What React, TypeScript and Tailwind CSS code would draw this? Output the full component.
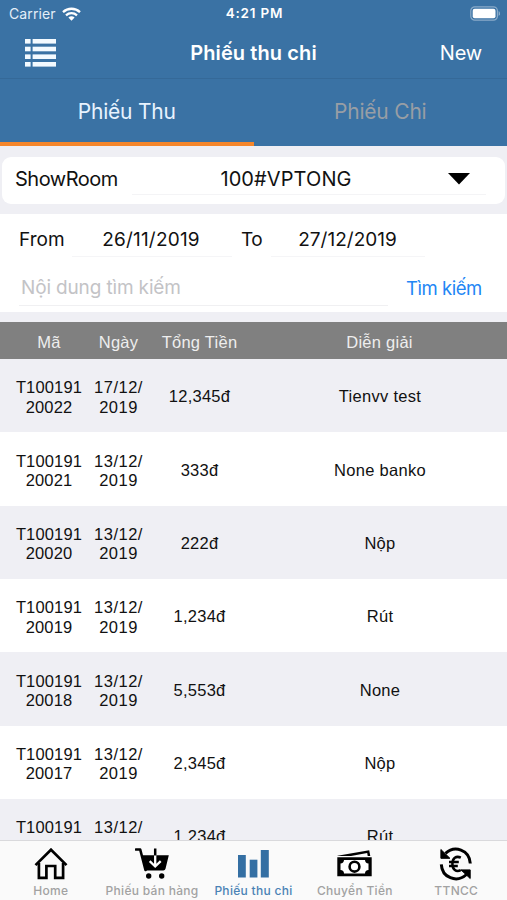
import type { ReactNode } from "react";

const ROWS = [
  ["T100191", "20022", "17/12/", "2019", "12,345đ", "Tienvv test"],
  ["T100191", "20021", "13/12/", "2019", "333đ", "None banko"],
  ["T100191", "20020", "13/12/", "2019", "222đ", "Nộp"],
  ["T100191", "20019", "13/12/", "2019", "1,234đ", "Rút"],
  ["T100191", "20018", "13/12/", "2019", "5,553đ", "None"],
  ["T100191", "20017", "13/12/", "2019", "2,345đ", "Nộp"],
  ["T100191", "", "13/12/", "", "1,234đ", "Rút"],
];

function StatusBar() {
  return (
    <div className="grid h-[27px] grid-cols-3 items-center pr-[7px] pl-[9px] text-white">
      <div className="flex items-center gap-[6px]">
        <span className="text-[14px] tracking-[0.1px] text-[#e4eef8]">Carrier</span>
        <svg width="19" height="14" viewBox="0 0 19 14" fill="none" stroke="white" strokeWidth="2.3">
          <path d="M1 5.1C5.8.6 13.2.6 18 5.1" />
          <path d="M4 8.3c3.2-2.9 7.8-2.900 11 0" />
          <path d="M6.400 10.400 9.500 13.700l3.100-3.300c-1.800-1.600-4.400-1.600-6.200 0Z" fill="white" stroke="none" />
        </svg>
      </div>
      <span className="text-center text-[13.5px] font-semibold tracking-[0.8px] whitespace-nowrap">4:21 PM</span>
      <svg className="justify-self-end" width="30" height="15" viewBox="0 0 30 15">
        <rect x=".8" y=".8" width="26.600" height="13.400" rx="4" fill="none" stroke="#8aabc9" strokeWidth="1.200" />
        <rect x="2.700" y="2.700" width="22.800" height="9.600" rx="2" fill="white" />
        <path d="M28.600 5c2 1 2 4 0 5Z" fill="#8aabc9" />
      </svg>
    </div>
  );
}

function MenuIcon() {
  return (
    <svg width="31" height="28" viewBox="0 0 31 28" fill="#f3faff">
      {[0, 7.7, 15.4, 23].map((y) => (
        <g key={y}>
          <rect x="0" y={y} width="5.600" height="4.600" />
          <rect x="7.600" y={y} width="23.400" height="4.600" />
        </g>
      ))}
    </svg>
  );
}

function HomeIcon() {
  return (
    <svg width="34" height="33" viewBox="0 0 34 33" fill="none" stroke="black" strokeWidth="2.700">
      <path d="M1.500 17.100 17 1.700l15.500 15.400" />
      <path d="M4.900 15V29.800h7.500V18h8.800V29.800h7.900V15" />
    </svg>
  );
}

function CartIcon() {
  return (
    <svg width="34" height="33" viewBox="0 0 34 33">
      <path d="M1 1.500h4.200L10.500 22" fill="none" stroke="black" strokeWidth="2.600" strokeLinejoin="round" strokeLinecap="round" />
      <path d="M6.600 7.300h27.200L30.500 20.800q-.4 1.700-2.200 1.700H10.800Z" />
      <path d="M20.200 5v13M14.700 13.200l5.500 5.300 5.500-5.300" fill="none" stroke="white" strokeWidth="2.300" />
      <path d="M20.200.5v7" stroke="black" strokeWidth="2.500" />
      <circle cx="13.700" cy="28" r="2.700" />
      <circle cx="26.700" cy="28" r="2.700" />
    </svg>
  );
}

function BarsIcon() {
  return (
    <svg width="31" height="28" viewBox="0 0 31 28" fill="#346fa3">
      <rect x="0" y="5" width="7.800" height="22.500" />
      <rect x="11.700" y="9.700" width="7.700" height="17.800" />
      <rect x="22.800" y="0" width="8" height="27.500" />
    </svg>
  );
}

function MoneyIcon() {
  return (
    <svg className="mb-[2px]" width="35" height="27" viewBox="0 0 35 27">
      <path d="M.5 5.700 32.200.2l1.100 5.700H30.700l-.5-2.900L14 5.900H.5Z" />
      <path d="M.3 7.300h34.400v19H.3Z" />
      <path d="M7 10h21c0 2 1.300 3.400 3.500 3.400v6.600c-2.200 0-3.500 1.300-3.500 3.400H7c0-2.100-1.300-3.400-3.500-3.400v-6.600C5.700 13.400 7 12 7 10Z" fill="white" />
      <circle cx="17.500" cy="16.700" r="4.900" fill="none" stroke="black" strokeWidth="2.600" />
    </svg>
  );
}

function EuroCycleIcon() {
  return (
    <svg width="34" height="34" viewBox="0 0 34 34" fill="none" stroke="black" strokeWidth="3">
      <path d="M6.500 6.300C15.500-2 30.500 2.500 31.300 16.500" />
      <path d="M2.300 17.300C3 30.500 17.500 36.500 27.500 27.500" />
      <path d="M1.900 2.500v8.800h9Z" fill="black" stroke="black" strokeWidth="1" strokeLinejoin="round" />
      <path d="M22 22.900h9.200v8.600Z" fill="black" stroke="black" strokeWidth="1" strokeLinejoin="round" />
      <path d="M21.800 10.700c-4.700-2.300-8.400.6-8.400 6.200s3.700 8.500 8.400 6.200M10 14.900h9.800M10 19h8.800" strokeWidth="2.500" />
    </svg>
  );
}

function TabItem({ icon, label, active = false }: { icon: ReactNode; label: string; active?: boolean }) {
  return (
    <div className="flex flex-col items-center pt-[5px]">
      <div className="flex h-[36px] items-center justify-center">{icon}</div>
      <span
        className={`mt-[1px] text-[12px] leading-[16px] font-medium tracking-[0.3px] whitespace-nowrap ${active ? "text-[#4a82b5]" : "text-[#a2a2a2]"}`}
      >
        {label}
      </span>
    </div>
  );
}

const COLUMNS = "grid grid-cols-[70px_69px_93px_267px] pl-[14px]";

export default function App() {
  return (
    <div className="flex h-[900px] w-[507px] flex-col overflow-hidden bg-[#efeff4] font-['Inter','Liberation_Sans',sans-serif] text-[#111]">
      <header className="h-[146px] shrink-0 bg-[#3a72a4]">
        <StatusBar />
        <div className="grid h-[52px] grid-cols-3 items-center border-b border-[#356998] px-[25px] text-white">
          <MenuIcon />
          <h1 className="text-center text-[20px] font-semibold tracking-[0.1px] whitespace-nowrap">Phiếu thu chi</h1>
          <span className="text-right text-[20px] tracking-[-0.2px]">New</span>
        </div>
        <nav className="grid h-[67px] grid-cols-2 text-center text-[21px] leading-[65px] tracking-[-0.2px]">
          <span className="h-[67px] border-b-4 border-[#f5862b] text-[#e8f3fe]">Phiếu Thu</span>
          <span className="h-[67px] text-[#989ea5]">Phiếu Chi</span>
        </nav>
      </header>

      <section className="mx-[2px] mt-[11px] flex h-[47px] shrink-0 rounded-[9px] bg-white pl-[13px] text-[20px]">
        <span className="w-[117px] leading-[44px] tracking-[-0.5px]">ShowRoom</span>
        <div className="flex h-[38px] w-[354px] items-center border-b border-[#f4f4f6]">
          <span className="w-[308px] pt-[6px] text-center tracking-[0.1px]">100#VPTONG</span>
          <svg className="mt-[6px] ml-[8px]" width="22" height="12" viewBox="0 0 22 12">
            <path d="M0 0h22L11 11.500Z" />
          </svg>
        </div>
      </section>

      <section className="mt-[10px] h-[98px] shrink-0 bg-white pl-[19px]">
        <div className="flex h-[43px] text-[19px] leading-[51px]">
          <span className="w-[53px]">From</span>
          <span className="w-[160px] border-b border-[#f5f5f7] pr-[2px] text-center tracking-[0.2px]">26/11/2019</span>
          <span className="w-[39px] pl-[9px] tracking-[-0.5px]">To</span>
          <span className="w-[154px] border-b border-[#f5f5f7] pr-px text-center">27/12/2019</span>
        </div>
        <div className="flex h-[49px] text-[19px] leading-[62px]">
          <span className="w-[369px] border-b border-[#f0f0f2] pl-[2px] tracking-[-0.15px] text-[#c3c3c6]">Nội dung tìm kiếm</span>
          <span className="pl-[18px] text-[18.5px] tracking-[-0.45px] text-[#2286f5]">Tìm kiếm</span>
        </div>
      </section>

      <main className="mt-[10px] h-[518px] shrink-0 overflow-hidden font-['Liberation_Sans',Arial,sans-serif] text-[16.5px]">
        <div className={`${COLUMNS} h-[37px] bg-[#808080] text-center leading-[40px] tracking-[0.25px] text-[#eee]`}>
          <span>Mã</span>
          <span>Ngày</span>
          <span>Tổng Tiền</span>
          <span>Diễn giải</span>
        </div>
        {ROWS.map(([code, codeEnd, day, year, amount, note], index) => (
          <div key={index} className={`${COLUMNS} h-[73.35px] items-center text-center leading-[19.5px] odd:bg-white even:bg-[#efeff4]`}>
            <span className="h-[43px] pt-[4px] tracking-[0.15px]">{code}<br />{codeEnd}</span>
            <span className="h-[43px] pt-[4px] tracking-[0.5px]">{day}<br />{year}</span>
            <span className="pt-[3px] tracking-[0.25px]">{amount}</span>
            <span className="pt-[3px] pl-px tracking-[0.3px]">{note}</span>
          </div>
        ))}
      </main>

      <footer className="grid h-[60px] shrink-0 grid-cols-5 border-t border-[#d9d9dc] bg-[#fafafa]">
        <TabItem icon={<HomeIcon />} label="Home" />
        <TabItem icon={<CartIcon />} label="Phiếu bán hàng" />
        <TabItem icon={<BarsIcon />} label="Phiếu thu chi" active />
        <TabItem icon={<MoneyIcon />} label="Chuyển Tiền" />
        <TabItem icon={<EuroCycleIcon />} label="TTNCC" />
      </footer>
    </div>
  );
}
